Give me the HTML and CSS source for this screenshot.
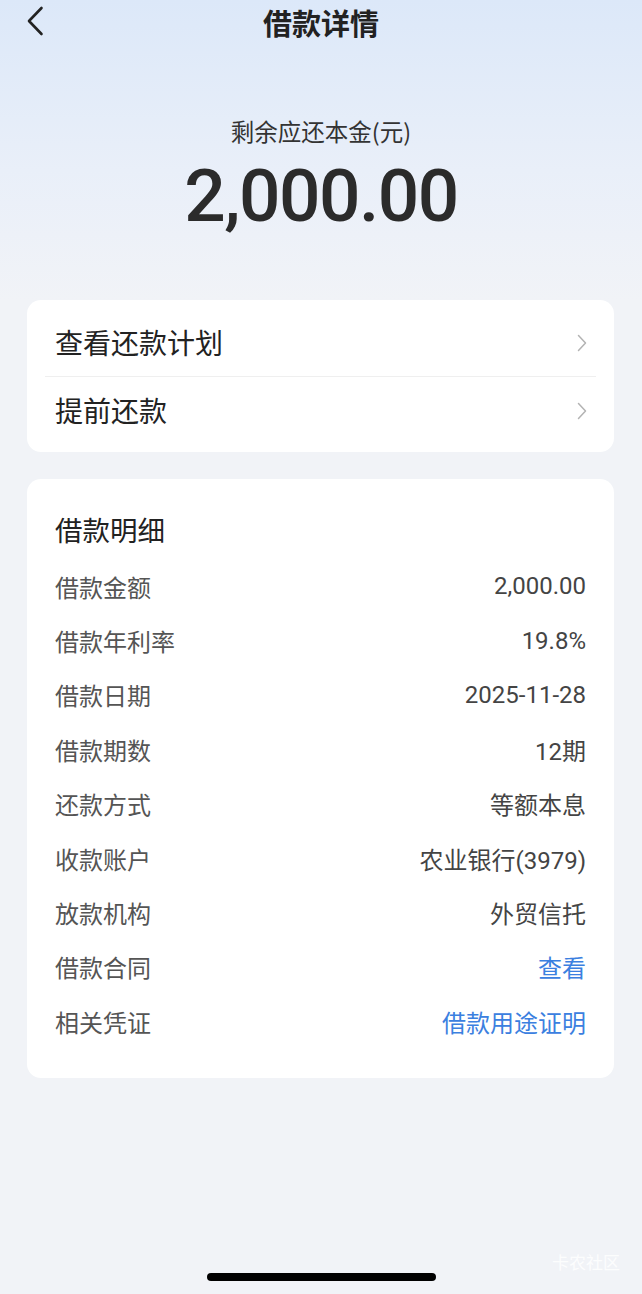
FILE: index.html
```html
<!DOCTYPE html>
<html lang="zh-CN">
<head>
  <meta charset="UTF-8">
  <meta name="viewport" content="width=device-width, initial-scale=1.0">
  <title>借款详情</title>
  <link rel="stylesheet" href="styles.css">
</head>
<body>
  <div class="page">
    <div class="nav">
      <span class="nav-back">
        <svg width="18" height="30" viewBox="0 0 18 30"><path d="M15.5 2 L3 15 L15.5 28" fill="none" stroke="#222" stroke-width="2.6" stroke-linecap="round" stroke-linejoin="round"/></svg>
      </span>
      <div class="nav-title">借款详情</div>
      <span></span>
    </div>

    <div class="summary">
      <div class="summary-label">剩余应还本金(元)</div>
      <div class="summary-amount">2,000.00</div>
    </div>

    <div class="card menu">
      <div class="menu-item">
        <span>查看还款计划</span>
        <svg class="chevron" width="10" height="18" viewBox="0 0 10 18"><path d="M1.5 1.5 L8.5 9 L1.5 16.5" fill="none" stroke="#b3b3b3" stroke-width="1.5" stroke-linecap="round" stroke-linejoin="round"/></svg>
      </div>
      <div class="menu-item">
        <span>提前还款</span>
        <svg class="chevron" width="10" height="18" viewBox="0 0 10 18"><path d="M1.5 1.5 L8.5 9 L1.5 16.5" fill="none" stroke="#b3b3b3" stroke-width="1.5" stroke-linecap="round" stroke-linejoin="round"/></svg>
      </div>
    </div>

    <div class="card detail">
      <div class="detail-title">借款明细</div>
      <div class="detail-row"><span class="label">借款金额</span><span class="value">2,000.00</span></div>
      <div class="detail-row"><span class="label">借款年利率</span><span class="value">19.8%</span></div>
      <div class="detail-row"><span class="label">借款日期</span><span class="value">2025-11-28</span></div>
      <div class="detail-row"><span class="label">借款期数</span><span class="value">12期</span></div>
      <div class="detail-row"><span class="label">还款方式</span><span class="value">等额本息</span></div>
      <div class="detail-row"><span class="label">收款账户</span><span class="value">农业银行(3979)</span></div>
      <div class="detail-row"><span class="label">放款机构</span><span class="value">外贸信托</span></div>
      <div class="detail-row"><span class="label">借款合同</span><span class="value link">查看</span></div>
      <div class="detail-row"><span class="label">相关凭证</span><span class="value link">借款用途证明</span></div>
    </div>

    <div class="home-bar"></div>
    <div class="watermark">卡农社区</div>
  </div>
</body>
</html>
```

FILE: styles.css
```css
body {
  margin: 0;
  font-family: Roboto, "Noto Sans CJK SC", sans-serif;
  color: #222;
  background: #f1f3f7;
}

.page {
  position: relative;
  height: 1294px;
  display: flex;
  flex-direction: column;
  background: linear-gradient(180deg, #dce8f9 0px, #e9eff9 170px, #f1f3f7 300px, #f1f3f7 100%);
  overflow: hidden;
}

.nav {
  height: 44px;
  display: grid;
  grid-template-columns: 80px 1fr 80px;
  align-items: center;
}

.nav-back {
  display: flex;
  align-items: center;
  padding-left: 26px;
  height: 44px;
  margin-top: -2px;
}

.nav-title {
  text-align: center;
  font-family: "Noto Sans CJK SC", sans-serif;
  font-size: 29px;
  font-weight: 700;
  color: #222;
  line-height: 44px;
}

.summary {
  padding-top: 71px;
  text-align: center;
}

.summary-label {
  font-family: "Noto Sans CJK SC", sans-serif;
  font-size: 23.5px;
  line-height: 32px;
  color: #333;
}

.summary-amount {
  margin-top: 9px;
  font-family: Roboto, sans-serif;
  font-size: 73px;
  font-weight: 500;
  letter-spacing: -1.5px;
  line-height: 80px;
  color: #2b2b2b;
}

.card {
  background: #fff;
  border-radius: 14px;
  margin: 0 28px 0 27px;
}

.menu {
  margin-top: 64px;
  padding: 8px 0;
}

.menu-item {
  position: relative;
  height: 68px;
  display: flex;
  align-items: center;
  justify-content: space-between;
  padding: 0 27px 0 28px;
  font-family: "Noto Sans CJK SC", sans-serif;
  font-size: 28px;
  color: #222;
}

.menu-item + .menu-item::before {
  content: "";
  position: absolute;
  top: 0;
  left: 18px;
  right: 18px;
  border-top: 1px solid #efefef;
}

.chevron {
  margin-top: 1px;
}

.detail {
  margin-top: 27px;
  padding: 22px 28px 29px;
}

.detail-title {
  font-family: "Noto Sans CJK SC", sans-serif;
  font-size: 27.5px;
  line-height: 56px;
  color: #222;
  margin-bottom: 2px;
}

.detail-row {
  height: 54.4px;
  display: flex;
  align-items: center;
  justify-content: space-between;
  font-size: 24px;
}

.label {
  font-family: "Noto Sans CJK SC", sans-serif;
  color: #555;
}

.value {
  color: #444;
}

.value.link {
  color: #3b80e0;
}

.home-bar {
  margin: auto auto 13px;
  width: 229px;
  height: 8px;
  border-radius: 4px;
  background: #000;
}

.watermark {
  position: absolute;
  right: 22px;
  bottom: 20px;
  font-family: "Noto Sans CJK SC", sans-serif;
  font-size: 17px;
  color: rgba(255, 255, 255, 0.85);
}
```
